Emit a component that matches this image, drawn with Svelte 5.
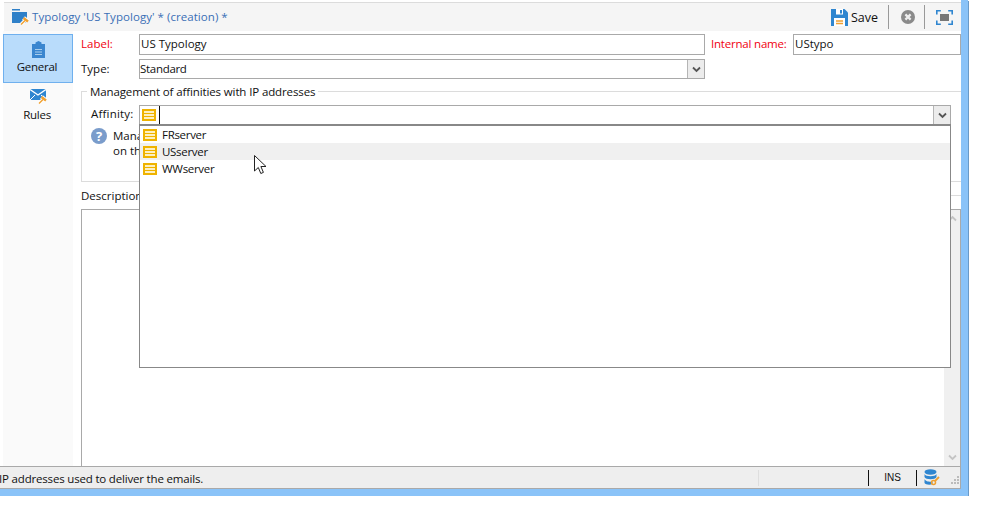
<script lang="ts">
  const servers = [
    { name: 'FRserver', hover: false },
    { name: 'USserver', hover: true },
    { name: 'WWserver', hover: false }
  ];
</script>

{#snippet listIcon()}
  <svg class="list-icon" width="14" height="12" viewBox="0 0 14 12" aria-hidden="true">
    <rect x="1" y="1" width="12" height="10" fill="#fdf0c2" stroke="#efb300" stroke-width="2" />
    <path d="M2 4.500h10M2 7.500h10" stroke="#efb300" stroke-width="1" />
  </svg>
{/snippet}

{#snippet chevron()}
  <svg width="9" height="7" viewBox="0 0 9 7" fill="none" aria-hidden="true">
    <path d="M1 1.500l3.500 3.500L8 1.500" stroke="#555" stroke-width="1.800" />
  </svg>
{/snippet}

{#snippet gavel()}
  <path d="M1 8.500l4-4" stroke="#fff" stroke-width="3.500" />
  <path d="M3.500 2l4.500 3.500" stroke="#fff" stroke-width="4.500" />
  <path d="M1 8.500l4-4" stroke="#f0a030" stroke-width="1.500" />
  <path d="M3.500 2l4.500 3.500" stroke="#f0a030" stroke-width="2.500" />
{/snippet}

<div class="window">
  <header class="titlebar">
    <svg class="title-icon" width="18" height="16" viewBox="0 0 18 16" aria-hidden="true">
      <path d="M0 0h8v1.500H0zM0 3h15v11H0z" fill="#2f80c8" />
      <g transform="translate(8 7)">{@render gavel()}</g>
    </svg>
    <span class="title">Typology 'US Typology' * (creation) *</span>
    <span class="save">
      <svg width="17" height="17" viewBox="0 0 17 17" aria-hidden="true">
        <path d="M0 0h13.500L17 3.500V17H0z" fill="#2f86d0" />
        <rect x="5" y="0" width="7" height="5.500" fill="#fff" />
        <rect x="9" y="1" width="2" height="3.500" fill="#2f86d0" />
        <rect x="3" y="9" width="11" height="8" fill="#fff" />
        <path d="M5 12h7M5 14.500h7" stroke="#f0a030" stroke-width="1.500" />
      </svg>
      Save
    </span>
    <span class="sep"></span>
    <svg width="14" height="14" viewBox="0 0 14 14" aria-hidden="true">
      <circle cx="7" cy="7" r="7" fill="#8a8a8a" />
      <path d="M4.400 4.400l5.200 5.200M9.600 4.400l-5.200 5.200" stroke="#eee" stroke-width="2.200" />
    </svg>
    <span class="sep sep-last"></span>
    <svg class="fit" width="17" height="15" viewBox="0 0 17 15" fill="none" aria-hidden="true">
      <path d="M.8 4.500V.8h4M12.200.8h4v3.700M16.200 10.500v3.700h-4M4.800 14.200h-4v-3.700" stroke="#2f86d0" stroke-width="1.600" />
      <rect x="4" y="4" width="9" height="7" fill="#777" />
    </svg>
  </header>

  <div class="body">
    <nav class="sidebar">
      <div class="tab active">
        <svg width="13" height="17" viewBox="0 0 13 17" aria-hidden="true">
          <path d="M0 3h3.500V1.500L6.500 0l3 1.500V3H13v14H0z" fill="#3a86cf" />
          <path d="M3 8.500h7M3 11h7M3 13.500h7" stroke="#a8cdec" stroke-width="1" />
        </svg>
        <span>General</span>
      </div>
      <div class="tab">
        <svg width="17" height="16" viewBox="0 0 17 16" aria-hidden="true">
          <path d="M0 0h16v11H0z" fill="#2f86d0" />
          <path d="M0 .5l8 5.500 8-5.500" fill="none" stroke="#fff" stroke-width="1.400" />
          <path d="M0 11l5-5M16 11l-5-5" fill="none" stroke="#fff" stroke-width="1" />
          <g transform="translate(8 6)">{@render gavel()}</g>
        </svg>
        <span>Rules</span>
      </div>
    </nav>

    <main class="form">
      <div class="row row-label">
        <span class="field-label required">Label:</span>
        <div class="input wide">US Typology</div>
        <span class="required internal">Internal name:</span>
        <div class="input internal-value">UStypo</div>
      </div>
      <div class="row row-type">
        <span class="field-label">Type:</span>
        <div class="input select">
          <span class="select-value">Standard</span>
          <span class="drop">{@render chevron()}</span>
        </div>
      </div>

      <section class="group">
        <span class="legend">Management of affinities with IP addresses</span>
        <div class="affinity-row">
          <span class="affinity-label">Affinity:</span>
          <div class="combo">
            <span class="combo-icon">{@render listIcon()}</span>
            <span class="caret"></span>
            <span class="drop">{@render chevron()}</span>
            <ul class="popup">
              {#each servers as s}
                <li class:hover={s.hover}>{@render listIcon()}<span>{s.name}</span></li>
              {/each}
            </ul>
          </div>
        </div>
        <div class="help">
          <span class="help-mark" aria-hidden="true">?</span>
          <p>Mana<br />on th</p>
        </div>
      </section>

      <div class="desc-head">
        <span>Description</span>
        <span class="desc-line"></span>
      </div>
      <div class="desc">
        <div class="scroll">
          <svg width="9" height="7" viewBox="0 0 9 7" fill="none" aria-hidden="true">
            <path d="M1 5.500L4.500 2 8 5.500" stroke="#c4c4c4" stroke-width="1.800" />
          </svg>
          <svg width="9" height="7" viewBox="0 0 9 7" fill="none" aria-hidden="true">
            <path d="M1 1.500l3.500 3.500L8 1.500" stroke="#c4c4c4" stroke-width="1.800" />
          </svg>
        </div>
      </div>
    </main>
  </div>

  <footer class="status">
    <span class="status-text">IP addresses used to deliver the emails.</span>
    <span class="cell-faint"></span>
    <span class="cell-line"></span>
    <span class="ins">INS</span>
    <span class="cell-line second"></span>
    <svg width="16" height="17" viewBox="0 0 16 17" aria-hidden="true">
      <ellipse cx="6.500" cy="3" rx="6" ry="2.700" fill="#2f86d0" />
      <path d="M.5 5c1 3 11 3 12 0v3c-1 3-11 3-12 0z" fill="#2f86d0" />
      <path d="M.5 10c1 3 7 3 8 2.500V15c-3 1.500-7 .5-8-1z" fill="#2f86d0" />
      <circle cx="9.500" cy="13.500" r="2" fill="none" stroke="#f0a030" stroke-width="1.500" />
      <path d="M11 12l4-4" stroke="#f0a030" stroke-width="1.800" />
    </svg>
    <svg class="grip" width="9" height="9" viewBox="0 0 9 9" fill="#bbb" aria-hidden="true">
      <rect x="6" y="0" width="2" height="2" />
      <rect x="3" y="3" width="2" height="2" />
      <rect x="6" y="3" width="2" height="2" />
      <rect x="0" y="6" width="2" height="2" />
      <rect x="3" y="6" width="2" height="2" />
      <rect x="6" y="6" width="2" height="2" />
    </svg>
  </footer>

  <svg class="cursor" width="14" height="20" viewBox="0 0 14 20" aria-hidden="true">
    <path d="M.5.5v15.500l3.800-3.500 2.500 6 2.600-1.100-2.500-5.900h5.100z" fill="#fff" stroke="#222" stroke-width="1" />
  </svg>
</div>

<style>
  :global(body) {
    background: #fff;
  }

  .window {
    position: relative;
    box-sizing: border-box;
    width: 968px;
    height: 496px;
    padding-top: 2px;
    background: #fff;
    border-right: 7px solid #8ac3f8;
    border-bottom: 7px solid #8ac3f8;
    box-shadow: 1px 1px 0 #6a9ac8;
    display: flex;
    flex-direction: column;
    font-family: "Open Sans", "Noto Sans", sans-serif;
    font-size: 11.5px;
    color: #111;
    overflow: hidden;
  }

  .titlebar {
    height: 28px;
    margin-left: 4px;
    flex: none;
    display: flex;
    align-items: center;
    padding-left: 8px;
    padding-right: 8px;
    background: #f5f5f5;
    border-top: 1px solid #dcdcdc;
  }

  .title-icon {
    margin-right: 2px;
  }

  .title {
    flex: 1;
    padding-bottom: 2px;
    color: #3a6fb5;
    letter-spacing: 0.05px;
  }

  .save {
    display: flex;
    align-items: center;
    gap: 3px;
    font-size: 12.5px;
  }

  .sep {
    width: 1px;
    height: 24px;
    background: #999;
    margin: 0 12px 0 10px;
  }

  .sep-last {
    margin-left: 9px;
  }

  .fit {
    margin-left: -1px;
  }

  .body {
    flex: 1;
    min-height: 0;
    display: flex;
  }

  .sidebar {
    width: 70px;
    margin-left: 3px;
    padding-top: 3px;
    background: #fafafa;
    flex: none;
  }

  .tab {
    height: 49px;
    box-sizing: border-box;
    display: flex;
    flex-direction: column;
    align-items: center;
    gap: 2px;
    letter-spacing: -0.25px;
    padding-top: 6px;
  }

  .tab span {
    margin-right: 2px;
  }

  .tab.active {
    gap: 1px;
    background: #b9dcfb;
    border: 1px solid #6fb0ee;
  }

  .form {
    flex: 1;
    min-width: 0;
    padding: 3px 0 0 8px;
    display: flex;
    flex-direction: column;
  }

  .row {
    display: flex;
    align-items: center;
  }

  .row-label {
    height: 21px;
  }

  .row-type {
    height: 20px;
    margin-top: 4px;
  }

  .field-label {
    width: 58px;
    flex: none;
    padding-bottom: 2px;
  }

  .required {
    color: #f00010;
  }

  .input {
    box-sizing: border-box;
    height: 100%;
    background: #fff;
    border: 1px solid #a9a9a9;
    padding-left: 1px;
    line-height: 17px;
  }

  .wide {
    width: 566px;
    flex: none;
  }

  .internal {
    margin-left: 6px;
    width: 82px;
    flex: none;
    padding-bottom: 2px;
    letter-spacing: -0.2px;
  }

  .internal-value {
    flex: 1;
  }

  .select {
    width: 566px;
    display: flex;
    padding-left: 0;
  }

  .select-value {
    flex: 1;
    letter-spacing: -0.3px;
  }

  .drop {
    width: 16px;
    flex: none;
    display: flex;
    align-items: center;
    justify-content: center;
    background: #ececec;
    border-left: 1px solid #b5b5b5;
  }

  .group {
    position: relative;
    box-sizing: border-box;
    height: 91px;
    margin-top: 12px;
    border: 1px solid #dcdcdc;
    border-right: none;
    padding: 3px 10px 0 9px;
  }

  .legend {
    position: absolute;
    top: -8px;
    left: 5px;
    padding: 0 3px;
    background: #fff;
    line-height: 15px;
    letter-spacing: -0.12px;
  }

  .affinity-row {
    display: flex;
    align-items: center;
    height: 20px;
    margin-top: 10px;
  }

  .affinity-label {
    width: 48px;
    flex: none;
    padding-bottom: 3px;
    letter-spacing: 0.2px;
  }

  .combo {
    position: relative;
    flex: 1;
    height: 100%;
    display: flex;
    align-items: stretch;
    box-sizing: border-box;
    border: 1px solid #a9a9a9;
    background: #fff;
  }

  .combo-icon {
    display: flex;
    align-items: center;
    padding-left: 2px;
    width: 19px;
    flex: none;
    box-sizing: border-box;
  }

  .caret {
    width: 1px;
    background: #111;
    flex: none;
  }

  .combo .drop {
    margin-left: auto;
  }

  .popup {
    position: absolute;
    top: 18px;
    left: -1px;
    right: -1px;
    height: 244px;
    box-sizing: border-box;
    margin: 0;
    padding: 0;
    list-style: none;
    background: #fff;
    border: 1px solid #888;
    border-top-width: 2px;
    z-index: 2;
  }

  .popup li {
    height: 17px;
    display: flex;
    align-items: center;
    gap: 5px;
    padding-left: 3px;
    letter-spacing: -0.3px;
  }

  .popup li.hover {
    background: #f0f0f0;
  }

  .help {
    display: flex;
    align-items: flex-start;
    gap: 6px;
    margin-top: 3px;
  }

  .help-mark {
    flex: none;
    width: 16px;
    height: 16px;
    border-radius: 50%;
    background: #7a9ccb;
    color: #fff;
    font-size: 13px;
    font-weight: 700;
    line-height: 16px;
    text-align: center;
  }

  .help p {
    margin: 0;
    line-height: 15px;
  }

  .desc-head {
    display: flex;
    align-items: center;
    gap: 4px;
    height: 27px;
  }

  .desc-line {
    flex: 1;
    height: 1px;
    background: #dcdcdc;
  }

  .desc {
    flex: 1;
    min-height: 0;
    display: flex;
    justify-content: flex-end;
    box-sizing: border-box;
    border: 1px solid #a9a9a9;
    border-bottom: none;
    background: #fff;
  }

  .scroll {
    width: 16px;
    background: #f0f0f0;
    display: flex;
    flex-direction: column;
    align-items: center;
    justify-content: space-between;
    padding: 5px 0;
    box-sizing: border-box;
  }

  .status {
    height: 23px;
    flex: none;
    box-sizing: border-box;
    display: flex;
    align-items: center;
    background: #eeeeee;
    border-top: 1px solid #a9a9a9;
    border-bottom: 1px solid #a9a9a9;
    border-right: 1px solid #a9a9a9;
  }

  .status-text {
    flex: 1;
    margin-left: -1px;
    padding-top: 1px;
    letter-spacing: -0.18px;
  }

  .cell-faint {
    width: 1px;
    height: 16px;
    margin-right: 109px;
    background: #dedede;
    flex: none;
  }

  .cell-line {
    width: 1px;
    height: 16px;
    background: #111;
    flex: none;
  }

  .ins {
    width: 47px;
    text-align: center;
    font-family: "Liberation Sans", sans-serif;
    font-size: 10px;
  }

  .cell-line.second {
    margin-right: 7px;
  }

  .grip {
    margin: 6px 0 0 11px;
  }

  .cursor {
    position: absolute;
    left: 254px;
    top: 155px;
    z-index: 3;
  }
</style>
